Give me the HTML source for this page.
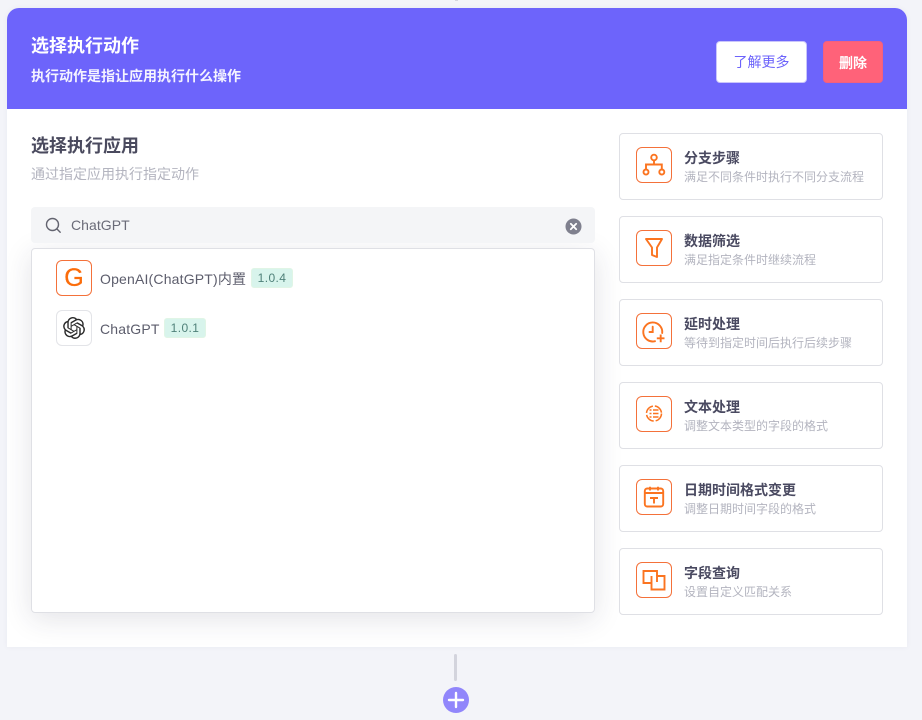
<!DOCTYPE html>
<html lang="zh">
<head>
<meta charset="utf-8">
<title>选择执行动作</title>
<style>
html,body{margin:0;padding:0;width:922px;height:720px;overflow:hidden;background:#f3f4f9;font-family:"Liberation Sans","Noto Sans CJK SC",sans-serif}
*{box-sizing:border-box}
.a{position:absolute;white-space:nowrap}
#panel{left:7px;top:8px;width:900px;height:639px;background:#fff;border-radius:12px 12px 0 0;box-shadow:0 0 6px rgba(60,60,90,.05);overflow:hidden}
#head{left:7px;top:8px;width:900px;height:101px;background:#6d64fb;border-radius:12px 12px 0 0}
.btn{border-radius:4px;text-align:center}
.card{left:619px;width:264px;height:67px;background:#fff;border:1px solid #dfe0e5;border-radius:4px}
.ic{left:16px;top:13px;width:36px;height:36px;border:1px solid #f4713a;border-radius:6px}
.ic svg{position:absolute;left:-1px;top:-1px;width:36px;height:36px;fill:none;stroke:#fb7420;stroke-width:1.9}
.t{left:64px;top:14px;font-size:14px;line-height:20px;font-weight:700;color:#4a4a61}
.d{left:64px;top:35px;font-size:12px;line-height:17px;color:#b3b4bf}
.tag{height:20px;line-height:19px;border-radius:3px;background:#d8f4ec;border:1px solid #e0f5e6;color:#4f8079;font-size:12px;text-align:center;letter-spacing:.4px}
.nm{font-size:14px;line-height:20px;color:#5c5d6c;letter-spacing:.18px}
</style>
</head>
<body>
<div class="a" style="left:455px;top:0;width:3px;height:1px;background:#d5d6de"></div>
<div class="a" id="panel"><div class="a" style="left:24px;top:240px;width:564px;height:365px;box-shadow:0 6px 28px rgba(40,40,70,.13);border-radius:4px"></div></div>
<div class="a" id="head"></div>
<div class="a" style="left:31px;top:34px;font-size:18px;line-height:24px;font-weight:700;color:#fff">选择执行动作</div>
<div class="a" style="left:31px;top:66px;font-size:14px;line-height:20px;font-weight:700;color:#f4f3ff">执行动作是指让应用执行什么操作</div>
<div class="a btn" style="left:716px;top:41px;width:91px;height:42px;background:#fff;border:1px solid #c9c5fb;color:#6c63fb;font-size:14px;line-height:40px">了解更多</div>
<div class="a btn" style="left:823px;top:41px;width:60px;height:42px;background:#ff6279;border:1px solid #f2607e;color:#fff;font-size:14px;font-weight:700;line-height:42px">删除</div>

<div class="a" style="left:31px;top:134px;font-size:18px;line-height:24px;font-weight:700;color:#4a4a5e">选择执行应用</div>
<div class="a" style="left:31px;top:164px;font-size:14px;line-height:20px;color:#b3b4bf">通过指定应用执行指定动作</div>

<div class="a" style="left:31px;top:207px;width:564px;height:36px;background:#f4f5f7;border-radius:4px"></div>
<svg class="a" style="left:44px;top:216px" width="18" height="18" viewBox="0 0 18 18" fill="none" stroke="#62636f" stroke-width="1.4"><circle cx="8.5" cy="8.500" r="6"/><path d="M13 13L16.200 16.200" stroke-linecap="round"/></svg>
<div class="a" style="left:71px;top:215px;font-size:14px;line-height:20px;color:#6a6b78;letter-spacing:.05px">ChatGPT</div>
<svg class="a" style="left:565px;top:218px" width="17" height="17" viewBox="0 0 17 17"><circle cx="8.5" cy="8.5" r="8" fill="#7f808e"/><path d="M5.8 5.8L11.2 11.2M11.2 5.8L5.8 11.2" stroke="#fff" stroke-width="1.8" stroke-linecap="round"/></svg>

<div class="a" style="left:31px;top:248px;width:564px;height:365px;background:#fff;border:1px solid #dfe0e5;border-radius:4px"></div>
<div class="a" style="left:56px;top:260px;width:36px;height:36px;border:1px solid #f4713a;border-radius:6px;background:#fff;color:#fb6c0a;font-size:25px;line-height:35px;text-align:center;-webkit-text-stroke:.3px #fb6c0a">G</div>
<div class="a nm" style="left:100px;top:269px">OpenAI(ChatGPT)内置</div>
<div class="a tag" style="left:251px;top:268px;width:42px">1.0.4</div>
<div class="a" style="left:56px;top:310px;width:36px;height:36px;border:1px solid #e3e4e8;border-radius:6px;background:#fff"></div>
<svg class="a" style="left:63px;top:317px" width="22" height="22" viewBox="0 0 24 24" fill="#2b2b2b"><path d="M22.2819 9.8211a5.9847 5.9847 0 0 0-.5157-4.9108 6.0462 6.0462 0 0 0-6.5098-2.9A6.0651 6.0651 0 0 0 4.9807 4.1818a5.9847 5.9847 0 0 0-3.9977 2.9 6.0462 6.0462 0 0 0 .7427 7.0966 5.98 5.98 0 0 0 .511 4.9107 6.051 6.051 0 0 0 6.5146 2.9001A5.9847 5.9847 0 0 0 13.2599 24a6.0557 6.0557 0 0 0 5.7718-4.2058 5.9894 5.9894 0 0 0 3.9977-2.9001 6.0557 6.0557 0 0 0-.7475-7.0729zm-9.022 12.6081a4.4755 4.4755 0 0 1-2.8764-1.0408l.1419-.0804 4.7783-2.7582a.7948.7948 0 0 0 .3927-.6813v-6.7369l2.02 1.1686a.071.071 0 0 1 .038.052v5.5826a4.504 4.504 0 0 1-4.4945 4.4944zm-9.6607-4.1254a4.4708 4.4708 0 0 1-.5346-3.0137l.142.0852 4.783 2.7582a.7712.7712 0 0 0 .7806 0l5.8428-3.3685v2.3324a.0804.0804 0 0 1-.0332.0615L9.74 19.9502a4.4992 4.4992 0 0 1-6.1408-1.6464zM2.3408 7.8956a4.485 4.485 0 0 1 2.3655-1.9728V11.6a.7664.7664 0 0 0 .3879.6765l5.8144 3.3543-2.0201 1.1685a.0757.0757 0 0 1-.071 0l-4.8303-2.7865A4.504 4.504 0 0 1 2.3408 7.872zm16.5963 3.8558L13.1038 8.364 15.1192 7.2a.0757.0757 0 0 1 .071 0l4.8303 2.7913a4.4944 4.4944 0 0 1-.6765 8.1042v-5.6772a.79.79 0 0 0-.407-.667zm2.0107-3.0231l-.142-.0852-4.7735-2.7818a.7759.7759 0 0 0-.7854 0L9.409 9.2297V6.8974a.0662.0662 0 0 1 .0284-.0615l4.8303-2.7866a4.4992 4.4992 0 0 1 6.6802 4.66zM8.3065 12.863l-2.02-1.1638a.0804.0804 0 0 1-.038-.0567V6.0742a4.4992 4.4992 0 0 1 7.3757-3.4537l-.142.0805L8.704 5.459a.7948.7948 0 0 0-.3927.6813zm1.0976-2.3654l2.602-1.4998 2.6069 1.4998v2.9994l-2.5974 1.4997-2.6067-1.4997Z"/></svg>
<div class="a nm" style="left:100px;top:319px">ChatGPT</div>
<div class="a tag" style="left:164px;top:318px;width:42px">1.0.1</div>

<div class="a card" style="top:133px"><div class="a ic"><svg viewBox="0 0 36 36"><circle cx="18" cy="10.500" r="2.800"/><circle cx="10" cy="25" r="2.500"/><circle cx="25.800" cy="25" r="2.500"/><path d="M18 13.300V17.500M10 22.500V17.500H25.800V22.500"/></svg></div><div class="a t">分支步骤</div><div class="a d">满足不同条件时执行不同分支流程</div></div>
<div class="a card" style="top:216px"><div class="a ic"><svg viewBox="0 0 36 36"><path d="M10 9H26L21 17.500V27L16 25V17.500Z" stroke-linejoin="round"/></svg></div><div class="a t">数据筛选</div><div class="a d">满足指定条件时继续流程</div></div>
<div class="a card" style="top:299px"><div class="a ic"><svg viewBox="0 0 36 36"><path d="M19 28.200A9.500 9.500 0 1 1 26.200 20M16.700 13.700V19H13.500" stroke-linecap="round"/><path d="M20.800 25.300H28.500M24.700 21.500V29.200"/></svg></div><div class="a t">延时处理</div><div class="a d">等待到指定时间后执行后续步骤</div></div>
<div class="a card" style="top:382px"><div class="a ic"><svg viewBox="0 0 36 36" style="stroke-width:1.5"><circle cx="18" cy="17.500" r="7.500" stroke-dasharray="10 2"/><path d="M17 14H22.500M17 17.500H22.500M17 21H22.500M13.500 14H15.500M13.500 17.500H15.500M13.500 21H15.500"/></svg></div><div class="a t">文本处理</div><div class="a d">调整文本类型的字段的格式</div></div>
<div class="a card" style="top:465px"><div class="a ic"><svg viewBox="0 0 36 36"><rect x="8.800" y="9.500" width="18.400" height="18" rx="2.500"/><path d="M8.800 14H27.200M14 7.700V11.500M22 7.700V11.500M14 19H22M18 19V24.500"/></svg></div><div class="a t">日期时间格式变更</div><div class="a d">调整日期时间字段的格式</div></div>
<div class="a card" style="top:548px"><div class="a ic"><svg viewBox="0 0 36 36"><path d="M21 14V9H7.500V21H15.500"/><path d="M15.500 14V27.500H28.500V14H21V20"/></svg></div><div class="a t">字段查询</div><div class="a d">设置自定义匹配关系</div></div>

<div class="a" style="left:454px;top:654px;width:3px;height:27px;background:#d3d4dd;border-radius:2px"></div>
<div class="a" style="left:443px;top:687px;width:26px;height:26px;border-radius:50%;background:#9186fb"></div>
<svg class="a" style="left:443px;top:687px" width="26" height="26" viewBox="0 0 26 26"><path d="M13 6V20M6 13H20" stroke="#fff" stroke-width="2.400" stroke-linecap="round"/></svg>
</body>
</html>
